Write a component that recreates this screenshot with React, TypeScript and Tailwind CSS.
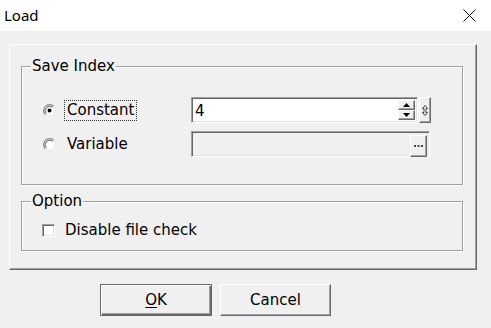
import React from "react";

const font = { fontFamily: '"DejaVu Sans", Verdana, sans-serif' };

function Radio({ checked }: { checked?: boolean }) {
  return (
    <svg width="13" height="13" viewBox="0 0 13 13" className="shrink-0">
      <circle cx="6.5" cy="6.5" r="6" fill="#fff" />
      <path d="M2.26 10.74 A6 6 0 0 1 10.74 2.26" fill="none" stroke="#8a8a8a" strokeWidth="1.3" />
      <path d="M3.2 9.8 A4.7 4.7 0 0 1 9.8 3.2" fill="none" stroke="#5a5a5a" strokeWidth="1" />
      <path d="M10.74 2.26 A6 6 0 0 1 2.26 10.74" fill="none" stroke="#e8e8e8" strokeWidth="1.2" />
      {checked && <circle cx="6.5" cy="6.5" r="2" fill="#000" />}
    </svg>
  );
}

function GroupBox({ label, h, children }: { label: string; h: string; children: React.ReactNode }) {
  return (
    <div
      className={`relative w-[442px] ${h} border border-[#a0a0a0] shadow-[inset_1px_1px_0_#fff,1px_1px_0_#fff]`}
    >
      <span className="absolute left-[9px] top-[-10px] px-[1px] bg-[#f0f0f0] text-[15px] leading-[18px] text-black">
        {label}
      </span>
      {children}
    </div>
  );
}

const raised =
  "bg-[#f0f0f0] border-t border-l border-r border-b border-t-white border-l-white border-r-[#696969] border-b-[#696969] shadow-[inset_-1px_-1px_0_#a0a0a0]";
const sunken =
  "border border-t-[#a0a0a0] border-l-[#a0a0a0] border-r-white border-b-white shadow-[inset_1px_1px_0_#696969,inset_-1px_-1px_0_#e3e3e3]";

export default function App() {
  return (
    <div className="w-[491px] h-[328px] bg-[#f0f0f0] overflow-hidden" style={font}>
      {/* title bar */}
      <div className="h-[31px] bg-white flex items-center justify-between pl-[4px] pr-[15px]">
        <span className="text-[15px] text-black" style={{ fontFamily: '"Noto Sans", "Open Sans", sans-serif' }}>
          Load
        </span>
        <svg width="13" height="13" viewBox="0 0 13 13">
          <path d="M0.5 0.5 L12.5 12.5 M12.5 0.5 L0.5 12.5" stroke="#111" strokeWidth="1" />
        </svg>
      </div>

      {/* main panel */}
      <div className={`ml-[9px] mt-[13px] w-[468px] h-[226px] pl-[11px] pt-[21px] ${raised}`}>
        <GroupBox label="Save Index" h="h-[119px]">
          <div className="pl-[21px] pt-[30px] flex flex-col gap-[8px]">
            <div className="flex items-center h-[26px]">
              <div className="w-[148px] flex items-center">
                <Radio checked />
                <span className="ml-[8px] px-[2px] border border-dotted border-[#333] text-[15px] leading-[19px] text-black">
                  Constant
                </span>
              </div>
              <div className={`w-[227px] h-[26px] bg-white flex items-stretch p-[2px] ${sunken}`}>
                <span className="flex-1 pl-[1px] text-[15px] leading-[22px] text-black">4</span>
                <div className="w-[17px] flex flex-col">
                  <div className={`flex-1 flex items-center justify-center ${raised}`}>
                    <svg width="7" height="4" viewBox="0 0 7 4">
                      <path d="M3.5 0 L7 4 L0 4 Z" fill="#000" />
                    </svg>
                  </div>
                  <div className={`flex-1 flex items-center justify-center ${raised}`}>
                    <svg width="7" height="4" viewBox="0 0 7 4">
                      <path d="M0 0 L7 0 L3.5 4 Z" fill="#000" />
                    </svg>
                  </div>
                </div>
              </div>
              <div className={`ml-[1px] w-[12px] h-[26px] flex items-center justify-center ${raised}`}>
                <svg width="6" height="11" viewBox="0 0 6 11">
                  <path
                    d="M3 0.5 L5.5 3.5 L4 3.5 L4 7.5 L5.5 7.5 L3 10.5 L0.5 7.5 L2 7.5 L2 3.5 L0.5 3.5 Z"
                    fill="none"
                    stroke="#333"
                    strokeWidth="0.9"
                  />
                </svg>
              </div>
            </div>
            <div className="flex items-center h-[26px]">
              <div className="w-[148px] flex items-center">
                <Radio />
                <span className="ml-[8px] px-[2px] border border-transparent text-[15px] leading-[19px] text-black">
                  Variable
                </span>
              </div>
              <div className={`w-[239px] h-[26px] bg-[#f0f0f0] flex items-stretch justify-end p-[2px] ${sunken}`}>
                <div className={`w-[17px] h-[22px] mt-[1px] flex items-center justify-center ${raised}`}>
                  <svg width="9" height="2" viewBox="0 0 9 2">
                    <rect x="0" y="0" width="2" height="2" fill="#444" />
                    <rect x="3.5" y="0" width="2" height="2" fill="#444" />
                    <rect x="7" y="0" width="2" height="2" fill="#444" />
                  </svg>
                </div>
              </div>
            </div>
          </div>
        </GroupBox>

        <div className="h-[16px]" />

        <GroupBox label="Option" h="h-[50px]">
          <div className="pl-[20px] pt-[19px] flex items-center">
            <div className={`w-[13px] h-[13px] bg-white ${sunken}`} />
            <span className="ml-[10px] text-[15px] leading-[18px] text-black">Disable file check</span>
          </div>
        </GroupBox>
      </div>

      {/* buttons */}
      <div className="mt-[14px] ml-[100px] flex gap-[8px]">
        <button className="w-[112px] h-[32px] border border-[#696969] bg-[#f0f0f0] shadow-[inset_1px_1px_0_#fff,inset_-1px_-1px_0_#696969,inset_-2px_-2px_0_#a0a0a0] text-[15px] text-black">
          <span className="underline underline-offset-[2px]">O</span>K
        </button>
        <button className={`w-[111px] h-[32px] text-[15px] text-black ${raised}`}>Cancel</button>
      </div>
    </div>
  );
}
